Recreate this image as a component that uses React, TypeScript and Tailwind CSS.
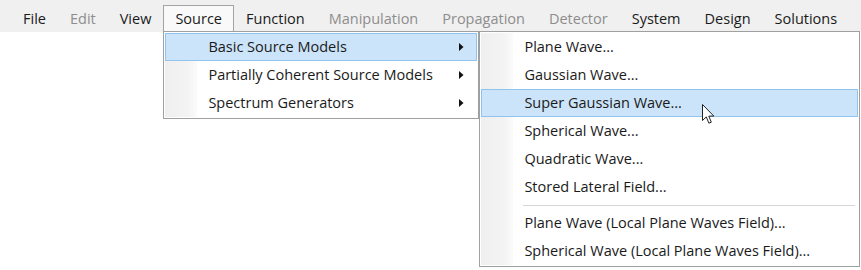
import React from "react";

const font = { fontFamily: '"Open Sans", "Noto Sans", sans-serif' };

const bar = [
  { label: "File" },
  { label: "Edit", disabled: true },
  { label: "View" },
  { label: "Source", open: true },
  { label: "Function" },
  { label: "Manipulation", disabled: true },
  { label: "Propagation", disabled: true },
  { label: "Detector", disabled: true },
  { label: "System" },
  { label: "Design" },
  { label: "Solutions" },
];

const sourceItems = [
  { label: "Basic Source Models", active: true },
  { label: "Partially Coherent Source Models" },
  { label: "Spectrum Generators" },
];

const waveItems: ({ label: string; active?: boolean } | "sep")[] = [
  { label: "Plane Wave..." },
  { label: "Gaussian Wave..." },
  { label: "Super Gaussian Wave...", active: true },
  { label: "Spherical Wave..." },
  { label: "Quadratic Wave..." },
  { label: "Stored Lateral Field..." },
  "sep",
  { label: "Plane Wave (Local Plane Waves Field)..." },
  { label: "Spherical Wave (Local Plane Waves Field)..." },
];

// popup panel: white with the grey icon gutter painted on the left
const popup =
  "border border-[#a0a0a0] bg-white bg-[linear-gradient(to_right,#efefef,#f3f3f3_70%,#fbfbfb)] bg-[length:32px_100%] bg-no-repeat bg-origin-content bg-clip-content p-[1px]";

function Arrow() {
  return (
    <svg width="5" height="8" viewBox="0 0 5 8" className="shrink-0">
      <polygon points="0,0 4.5,4 0,8" fill="#111" />
    </svg>
  );
}

function Row({ label, active, sub }: { label: string; active?: boolean; sub?: boolean }) {
  return (
    <div
      className={`flex h-[28px] items-center border ${
        active ? "border-[#90c4ef] bg-[#cce4f9]" : "border-transparent"
      }`}
    >
      <span className="ml-[42px] flex-1 text-[14.5px] text-[#1a1a1a]">{label}</span>
      {sub && (
        <span className="mr-[12px]">
          <Arrow />
        </span>
      )}
    </div>
  );
}

function Cursor() {
  return (
    <svg
      width="13"
      height="21"
      viewBox="0 0 13 21"
      className="absolute left-[702px] top-[104px] z-20"
    >
      <path
        d="M0.5 0.5 L0.5 16.5 L4.3 12.9 L6.9 19.2 L9.3 18.2 L6.8 12.1 L11.8 12.1 Z"
        fill="#fff"
        stroke="#222"
        strokeWidth="1"
        strokeLinejoin="round"
      />
    </svg>
  );
}

export default function App() {
  return (
    <div className="relative h-[270px] w-[861px] overflow-hidden bg-white" style={font}>
      <div className="flex h-[32px] items-stretch bg-[#f0f0f0] pl-[11px] pt-[5px]">
        {bar.map((b) =>
          b.open ? (
            <div
              key={b.label}
              className="relative flex items-center border border-b-0 border-[#a3a3a3] bg-[#f9f9f9] px-[11px] text-[14.5px] text-[#1a1a1a]"
            >
              {b.label}
              <div className={`absolute left-[-1px] top-[calc(100%-1px)] z-10 w-[316px] ${popup}`}>
                {sourceItems.map((s) => (
                  <Row key={s.label} label={s.label} active={s.active} sub />
                ))}
                <div className={`absolute left-[calc(100%+1px)] top-[-1px] w-[381px] ${popup}`}>
                  {waveItems.map((w, i) =>
                    w === "sep" ? (
                      <div key={i} className="flex h-[8px] items-center">
                        <div className="ml-[42px] mr-[3px] h-px flex-1 bg-[#d5d5d5]" />
                      </div>
                    ) : (
                      <Row key={w.label} label={w.label} active={w.active} />
                    )
                  )}
                </div>
              </div>
            </div>
          ) : (
            <div
              key={b.label}
              className={`flex items-center px-[12px] text-[14.5px] ${
                b.disabled ? "text-[#8d8d8d]" : "text-[#1a1a1a]"
              }`}
            >
              {b.label}
            </div>
          )
        )}
      </div>
      <Cursor />
    </div>
  );
}
